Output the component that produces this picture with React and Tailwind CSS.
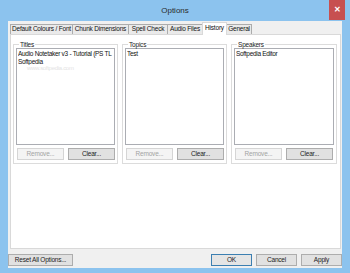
const tabs = [
  { key: "colours", label: "Default Colours / Font", w: "w-[63px]" },
  { key: "chunk", label: "Chunk Dimensions", w: "w-[57px]" },
  { key: "spell", label: "Spell Check", w: "w-[40px]" },
  { key: "audio", label: "Audio Files", w: "w-[36px]" },
  { key: "history", label: "History", w: "w-[25px]" },
  { key: "general", label: "General", w: "w-[26px]" },
];

const groups = [
  { key: "titles", label: "Titles", items: ["Audio Notetaker v3 - Tutorial (PS TL", "Softpedia"], watermark: true, w: "w-[105px]" },
  { key: "topics", label: "Topics", items: ["Test"], w: "w-[105px]" },
  { key: "speakers", label: "Speakers", items: ["Softpedia Editor"], w: "w-[106px]" },
];

function Btn({ children, disabled, primary, className = "" }) {
  return (
    <button
      type="button"
      className={`flex h-[12px] items-center justify-center whitespace-nowrap border text-[6.5px] leading-none tracking-[-0.2px] ${
        disabled
          ? "border-[#d5d5d5] bg-[#f4f4f4] text-[#a3a3a3]"
          : primary
            ? "border-[#3c7fb1] bg-[#e5e5e5] text-[#222]"
            : "border-[#adadad] bg-[#e1e1e1] text-[#222]"
      } ${className}`}
    >
      {children}
    </button>
  );
}

function Group({ group }) {
  return (
    <fieldset className={`${group.w} h-[123px] min-w-0 shrink-0 border border-[#dcdcdc] px-[2px] pb-[3px]`}>
      <legend className="ml-[3px] px-[1px] text-[6.5px] leading-[7px] tracking-[-0.2px] text-[#222]">{group.label}</legend>
      <div className="flex h-[97px] flex-col overflow-hidden border border-[#abadb3] bg-white px-[1px] pt-[1px] text-[6.5px] leading-[7.5px] tracking-[-0.3px] text-[#111]">
        {group.items.map((item) => (
          <div key={item} className="overflow-hidden whitespace-nowrap">{item}</div>
        ))}
        {group.watermark ? <div className="pl-[9px] text-[6px] leading-[7px] text-[#e4e4e4]">www.softpedia.com</div> : null}
      </div>
      <div className="mt-[3px] flex gap-[4px] pl-[1px]">
        <Btn disabled className="w-[47px]">Remove...</Btn>
        <Btn className="w-[47px]">Clear...</Btn>
      </div>
    </fieldset>
  );
}

export default function App() {
  return (
    <div className="flex h-[273px] w-[350px] flex-col bg-[#8cc3ee] font-['Liberation_Sans',Arial,sans-serif]">
      <div className="relative flex h-[21px] shrink-0 items-center justify-center">
        <span className="text-[8px] text-[#2b2b2b]">Options</span>
        <div className="absolute right-[5px] top-0 flex h-[20px] w-[16px] items-center justify-center bg-[#c75050] text-[8px] font-bold text-white">
          ✕
        </div>
      </div>

      <div className="mx-[8px] flex h-[247px] flex-col bg-[#f0f0f0]">
        <div className="flex h-[13px] items-end pl-[2px]">
          {tabs.map((tab) =>
            tab.key === "history" ? (
              <div
                key={tab.key}
                className={`${tab.w} relative z-10 -mb-px -ml-px flex h-[13px] shrink-0 items-start justify-center whitespace-nowrap border border-b-0 border-[#d9d9d9] bg-white pt-[2px] text-[6.5px] leading-none tracking-[-0.2px] text-[#111]`}
              >
                {tab.label}
              </div>
            ) : (
              <div
                key={tab.key}
                className={`${tab.w} -ml-px flex h-[10px] shrink-0 items-center justify-center whitespace-nowrap border border-b-0 border-[#acacac] bg-[#eaeaea] text-[6.5px] leading-none tracking-[-0.2px] text-[#111] first:ml-0`}
              >
                {tab.label}
              </div>
            ),
          )}
        </div>

        <div className="ml-[2px] mr-[1px] flex h-[215px] gap-[4px] border border-[#d9d9d9] bg-white px-[2px] pt-[6px]">
          {groups.map((group) => (
            <Group key={group.key} group={group} />
          ))}
        </div>

        <div className="mt-[5px] flex">
          <Btn className="w-[65px]">Reset All Options...</Btn>
          <div className="ml-auto flex gap-[4px]">
            <Btn primary className="w-[41px]">OK</Btn>
            <Btn className="w-[41px]">Cancel</Btn>
            <Btn className="w-[41px]">Apply</Btn>
          </div>
        </div>
      </div>
    </div>
  );
}
